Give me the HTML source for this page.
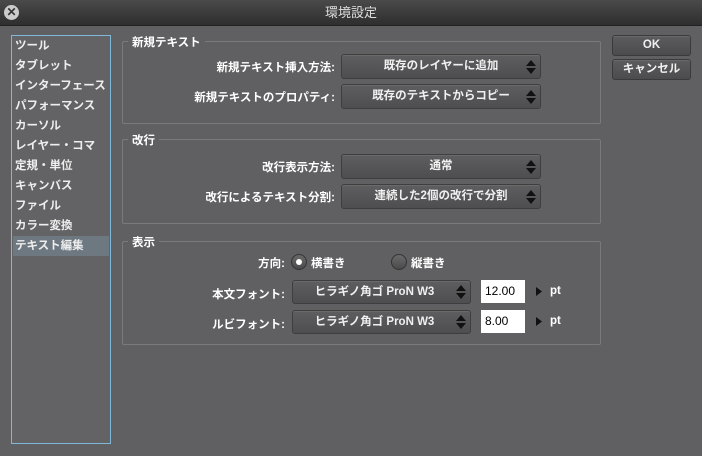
<html><head><style>
body{margin:0;width:702px;height:456px;background:#606062;font-family:"Liberation Sans","Noto Sans CJK JP",sans-serif;color:#fff;font-size:11.5px;position:relative;overflow:hidden}
.a{position:absolute}
.title{left:0;top:0;width:702px;height:25px;background:linear-gradient(#4a4a4a,#2e2e2e);border-bottom:1px solid #222;text-align:center;line-height:25px;font-size:13px;color:#ddd}
.close{left:4px;top:5px;width:15px;height:15px;border-radius:50%;background:#ccc;color:#333;font-size:12px;line-height:15px;text-align:center;font-weight:bold}
.list{left:11px;top:35px;width:98px;height:407px;border:1px solid #7fb8d8;background:#636365}
.list div{height:20px;line-height:20px;padding-left:3px;font-size:11.5px;font-weight:bold;color:#eee}
.list .sel{background:#6d7880;margin:0 1px;padding-left:2px}
.grp{border:1px solid #7a7a7a;border-radius:2px}
.leg{background:#606062;padding:0 4px;font-weight:bold;font-size:11.5px}
.lbl{text-align:right;font-weight:bold;font-size:11.5px}
.dd{border:1px solid #3e3e3e;border-radius:3px;background:linear-gradient(#5e5e60,#4e4e50);text-align:center;font-weight:bold;font-size:11.5px;color:#f0f0f0;box-shadow:inset 0 1px 0 #6a6a6a}
.arr{position:absolute;right:4px;top:3px;width:10px;height:18px}
.btn{border:1px solid #3a3a3a;border-radius:3px;background:linear-gradient(#5c5c5e,#4c4c4e);text-align:center;font-weight:bold;color:#f0f0f0;box-shadow:inset 0 1px 0 #6a6a6a}
.inp{background:#fff;color:#000;font-size:12px;line-height:22px;padding-left:4px;box-sizing:border-box}
.radio{width:14px;height:14px;border-radius:50%;border:1px solid #333;background:linear-gradient(#6a6a6a,#4a4a4a)}
</style></head><body>
<div class="a title">環境設定</div>
<div class="a close">✕</div>
<div class="a list">
<div>ツール</div><div>タブレット</div><div>インターフェース</div><div>パフォーマンス</div><div>カーソル</div><div>レイヤー・コマ</div><div>定規・単位</div><div>キャンバス</div><div>ファイル</div><div>カラー変換</div><div class="sel">テキスト編集</div>
</div>
<div class="a btn" style="left:612px;top:35px;width:77px;height:19px;line-height:19px">OK</div>
<div class="a btn" style="left:612px;top:59px;width:77px;height:19px;line-height:19px">キャンセル</div>

<div class="a grp" style="left:122px;top:41px;width:477px;height:81px"></div>
<div class="a leg" style="left:128px;top:34px">新規テキスト</div>
<div class="a lbl" style="left:130px;top:59px;width:205px">新規テキスト挿入方法:</div>
<div class="a lbl" style="left:130px;top:89px;width:205px">新規テキストのプロパティ:</div>
<div class="a dd" style="left:341px;top:54px;width:198px;height:23px;line-height:23px">既存のレイヤーに追加<svg class="arr" viewBox="0 0 10 18"><path d="M0 8L5 2L10 8ZM0 10L5 16L10 10Z" fill="#111"/></svg></div>
<div class="a dd" style="left:341px;top:84px;width:198px;height:23px;line-height:23px">既存のテキストからコピー<svg class="arr" viewBox="0 0 10 18"><path d="M0 8L5 2L10 8ZM0 10L5 16L10 10Z" fill="#111"/></svg></div>

<div class="a grp" style="left:122px;top:139px;width:477px;height:83px"></div>
<div class="a leg" style="left:128px;top:132px">改行</div>
<div class="a lbl" style="left:130px;top:159px;width:205px">改行表示方法:</div>
<div class="a lbl" style="left:130px;top:189px;width:205px">改行によるテキスト分割:</div>
<div class="a dd" style="left:341px;top:154px;width:198px;height:23px;line-height:23px">通常<svg class="arr" viewBox="0 0 10 18"><path d="M0 8L5 2L10 8ZM0 10L5 16L10 10Z" fill="#111"/></svg></div>
<div class="a dd" style="left:341px;top:184px;width:198px;height:23px;line-height:23px">連続した2個の改行で分割<svg class="arr" viewBox="0 0 10 18"><path d="M0 8L5 2L10 8ZM0 10L5 16L10 10Z" fill="#111"/></svg></div>

<div class="a grp" style="left:122px;top:241px;width:477px;height:102px"></div>
<div class="a leg" style="left:128px;top:234px">表示</div>
<div class="a lbl" style="left:130px;top:255px;width:155px">方向:</div>
<div class="a radio" style="left:291px;top:254px"><div class="a" style="left:4px;top:4px;width:6px;height:6px;border-radius:50%;background:#fff"></div></div>
<div class="a" style="left:311px;top:255px;font-weight:bold">横書き</div>
<div class="a radio" style="left:391px;top:254px"></div>
<div class="a" style="left:411px;top:255px;font-weight:bold">縦書き</div>
<div class="a lbl" style="left:130px;top:286px;width:155px">本文フォント:</div>
<div class="a lbl" style="left:130px;top:316px;width:155px">ルビフォント:</div>
<div class="a dd" style="left:292px;top:280px;width:177px;height:22px;line-height:22px;text-indent:-14px">ヒラギノ角ゴ ProN W3<svg class="arr" viewBox="0 0 10 18" style="top:2px"><path d="M0 8L5 2L10 8ZM0 10L5 16L10 10Z" fill="#111"/></svg></div>
<div class="a dd" style="left:292px;top:310px;width:177px;height:22px;line-height:22px;text-indent:-14px">ヒラギノ角ゴ ProN W3<svg class="arr" viewBox="0 0 10 18" style="top:2px"><path d="M0 8L5 2L10 8ZM0 10L5 16L10 10Z" fill="#111"/></svg></div>
<div class="a inp" style="left:481px;top:280px;width:44px;height:23px">12.00</div>
<div class="a inp" style="left:481px;top:310px;width:44px;height:23px">8.00</div>
<svg class="a" style="left:536px;top:287px" width="6" height="9"><path d="M0 0L6 4.5L0 9Z" fill="#111"/></svg>
<svg class="a" style="left:536px;top:317px" width="6" height="9"><path d="M0 0L6 4.5L0 9Z" fill="#111"/></svg>
<div class="a" style="left:550px;top:285px;font-weight:bold">pt</div>
<div class="a" style="left:550px;top:315px;font-weight:bold">pt</div>
</body></html>
